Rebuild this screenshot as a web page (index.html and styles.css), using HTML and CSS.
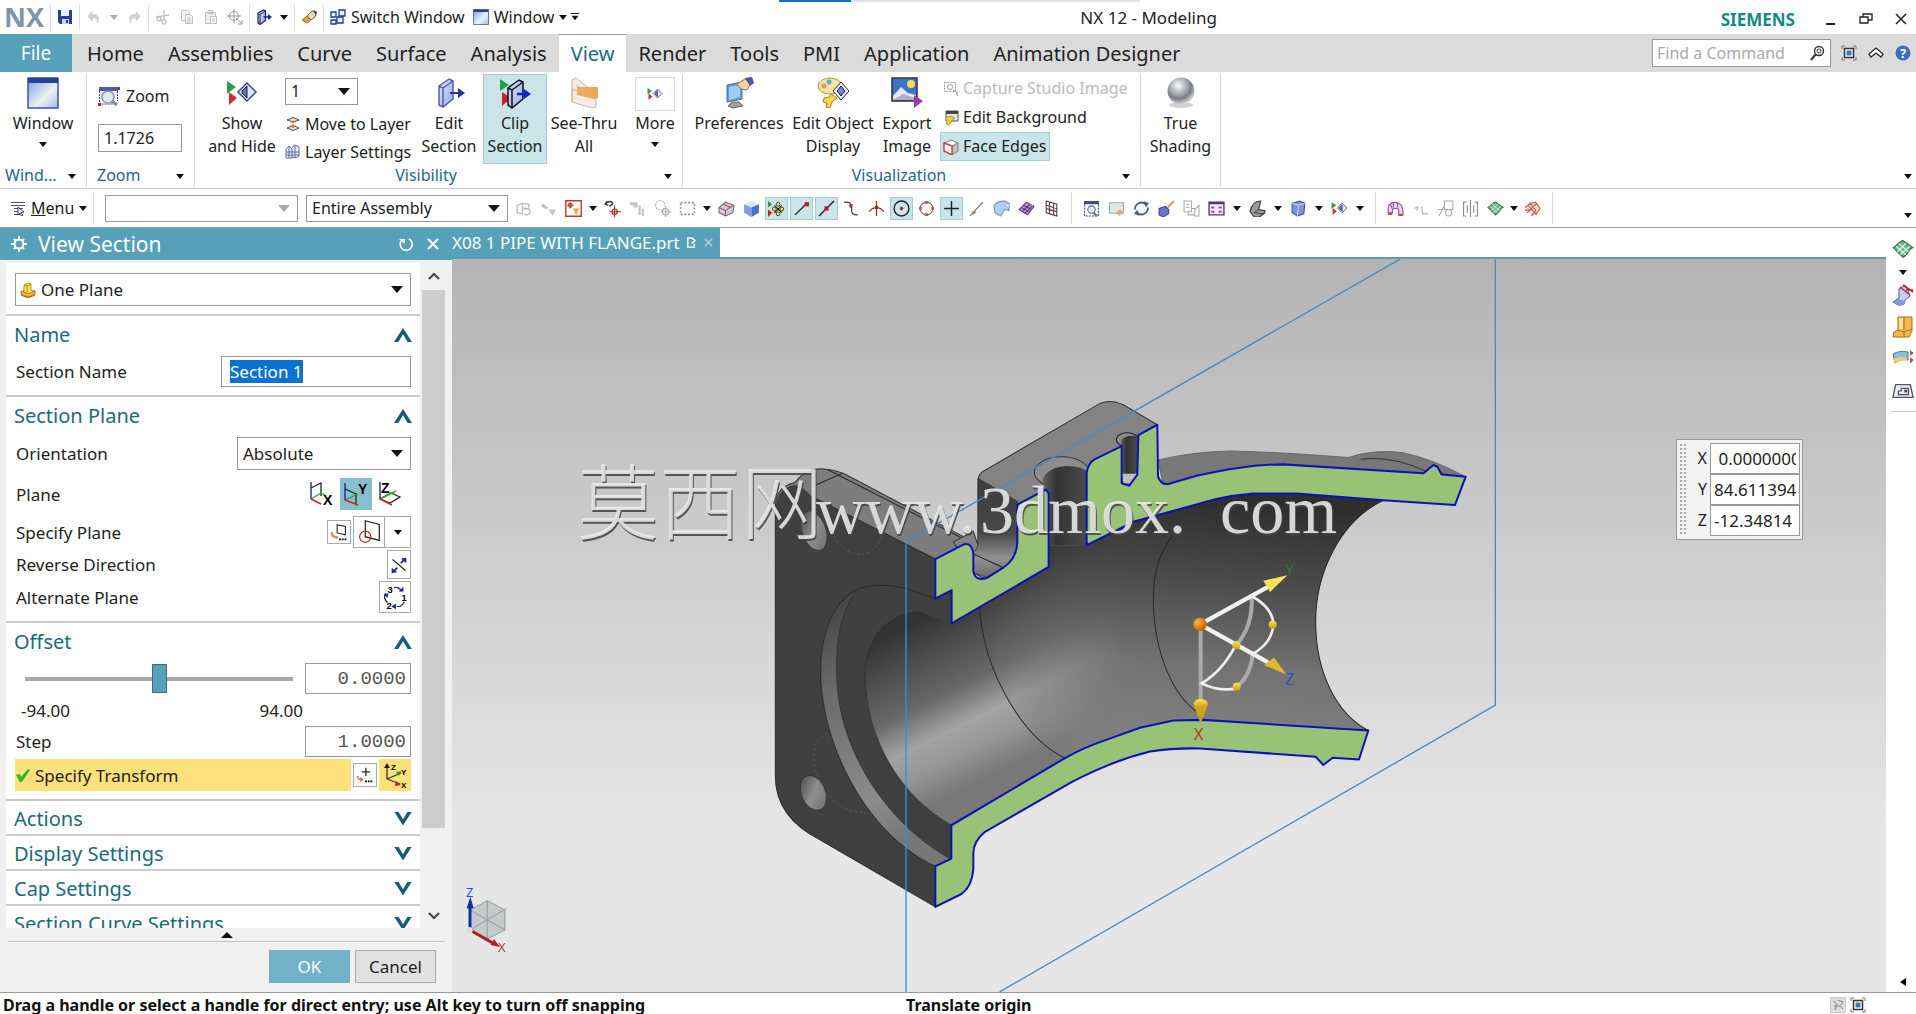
FILE: index.html
```html
<!DOCTYPE html>
<html lang="en">
<head>
<meta charset="utf-8">
<title>NX 12 - Modeling</title>
<link rel="stylesheet" href="styles.css">
<script src="app.js" defer></script>
</head>
<body>

<!-- Icon library -->
<svg class="sprite" aria-hidden="true">
  <defs>
    <linearGradient id="gBlue" x1="0" y1="0" x2="1" y2="1"><stop offset="0" stop-color="#7d9be0"/><stop offset=".6" stop-color="#eaf5ee"/><stop offset="1" stop-color="#a8b8ec"/></linearGradient>
    <linearGradient id="gSlab" x1="0" y1="0" x2="1" y2="1"><stop offset="0" stop-color="#dfe6fb"/><stop offset="1" stop-color="#94a8e6"/></linearGradient>
    <radialGradient id="gBall" cx=".4" cy=".3" r=".7"><stop offset="0" stop-color="#fff"/><stop offset=".35" stop-color="#b9bcc0"/><stop offset=".7" stop-color="#7b7e83"/><stop offset="1" stop-color="#d5d7da"/></radialGradient>
  </defs>
  <symbol id="i-down" viewBox="0 0 8 8"><path d="M0 2h8L4 7z"/></symbol>
  <symbol id="i-save" viewBox="0 0 16 16"><path d="M1 1h14v14H3l-2-2z" fill="#27408f"/><path d="M4 1h8v6H4z" fill="#eef2fa"/><path d="M5 10h7v5H5z" fill="#c8d2ea"/><path d="M9 11h2v3H9z" fill="#27408f"/></symbol>
  <symbol id="i-undo" viewBox="0 0 16 16"><path d="M2 7l4-4v3c6-1 8 2 5 8 1-4-1-6-5-5v3z" fill="#d2d2d2" stroke="#bbb" stroke-width=".6"/></symbol>
  <symbol id="i-redo" viewBox="0 0 16 16"><path d="M14 7l-4-4v3C4 5 2 8 5 14c-1-4 1-6 5-5v3z" fill="#d2d2d2" stroke="#bbb" stroke-width=".6"/></symbol>
  <symbol id="i-cut" viewBox="0 0 16 16"><g fill="none" stroke="#c4c4c4" stroke-width="1.4"><path d="M9 1v11M1 8l13-2"/><circle cx="4" cy="10" r="2"/><circle cx="9" cy="13" r="2"/></g></symbol>
  <symbol id="i-copy" viewBox="0 0 16 16"><g fill="#f6f6f6" stroke="#c0c0c0"><path d="M2.500 1.500h6l2 2v8h-8z"/><path d="M6.500 5.500h5l2 2v7h-7z"/><path d="M8 9h4M8 11h4M8 13h4"/></g></symbol>
  <symbol id="i-paste" viewBox="0 0 16 16"><g fill="#eee" stroke="#c0c0c0"><path d="M2.500 3.500h10v11h-10zM5 1.500h5v3H5z"/><path d="M7.500 7.500h6v7h-6zM9 10h3M9 12h3" fill="#fff"/></g></symbol>
  <symbol id="i-snip" viewBox="0 0 16 16"><g fill="none" stroke="#999"><circle cx="7" cy="7" r="4.500"/><path d="M7 0v14M0 7h14M9 9l6 6M15 11v4h-4"/></g></symbol>
  <symbol id="i-slab" viewBox="0 0 32 32"><path d="M6 9l10-7 4 2v18l-10 8-4-2z" fill="url(#gSlab)" stroke="#5360a6" stroke-width="1.500"/><path d="M6 9l4 2v19M10 11l10-7" fill="none" stroke="#5360a6" stroke-width="1.500"/><path d="M17 16h10" stroke="#27339b" stroke-width="2"/><path d="M25 11l7 5-7 5z" fill="#27339b"/></symbol>
  <symbol id="i-clip" viewBox="0 0 32 32"><path d="M1 2l9 6-9 6z" fill="#1fa34a"/><path d="M3 15l9 6-9 8z" fill="#d11f22"/><path d="M9 11l11-8 4 2v17l-11 9-4-3z" fill="url(#gSlab)" stroke="#111" stroke-width="1.500"/><path d="M9 11l4 2v18M13 13L24 5" fill="none" stroke="#111" stroke-width="1.500"/><path d="M18 17h9" stroke="#1323c9" stroke-width="2.500"/><path d="M25 12l7 5-7 5z" fill="#1323c9"/></symbol>
  <symbol id="i-slabdark" viewBox="0 0 32 32"><path d="M4 8l11-6 4 2v19L8 31l-4-3z" fill="url(#gSlab)" stroke="#1b2560" stroke-width="2.500"/><path d="M4 8l4 3v20M8 11l11-7" fill="none" stroke="#1b2560" stroke-width="2"/><path d="M15 16h11" stroke="#1323a9" stroke-width="3"/><path d="M24 10l8 6-8 6z" fill="#1323a9"/></symbol>
  <symbol id="i-eraser" viewBox="0 0 16 16"><path d="M1 11l5-4 5 3-5 4z" fill="#e8a23a" stroke="#7a4d12" stroke-width=".7"/><path d="M6 7l5-5 4 1-1 5-4 3z" fill="#f3d79a" stroke="#30408f" stroke-width=".8"/><path d="M12 1l4 2-1 4z" fill="#2b3fa5"/></symbol>
  <symbol id="i-switch" viewBox="0 0 16 16"><g fill="#e7eefb" stroke="#1d3c8f" stroke-width="1.300"><path d="M1 3h5v5H1zM9 1h6v6H9zM1 11h5v4H1z"/><path d="M7 8h6v6H7z"/></g></symbol>
  <symbol id="i-window" viewBox="0 0 32 32"><path d="M1 1h30v30H1z" fill="url(#gBlue)" stroke="#3a50b0" stroke-width="1.500"/><path d="M1 1h30v5H1z" fill="#263fa0"/></symbol>
  <symbol id="i-zoom" viewBox="0 0 24 20"><path d="M1 1h19v4H1z" fill="#4a5f9c"/><path d="M1.500 5v13h16" fill="none" stroke="#2d3e9c" stroke-dasharray="2 1"/><path d="M19.500 5v10" stroke="#2d3e9c" stroke-dasharray="2 1"/><circle cx="10" cy="11" r="6" fill="#e4eaee" stroke="#8b9499" stroke-width="1.600"/><path d="M14 15l5 4" stroke="#8a8f95" stroke-width="3"/><path d="M0 17h3v3H0zM19 1h3v3h-3z" fill="#c3211f"/></symbol>
  <symbol id="i-showhide" viewBox="0 0 32 24"><path d="M1 0l9 6-9 7z" fill="#2f9e4c"/><path d="M3 11l8 6-8 7z" fill="#d02d2d"/><path d="M21 2l9 9-9 9-9-9z" fill="#dfe7f8" stroke="#3b4a8c" stroke-width="1.500"/><path d="M21 5v12l-5-5v-2z" fill="#5b6fc4" stroke="#223"/></symbol>
  <symbol id="i-mlayer" viewBox="0 0 16 16"><g fill="none" stroke="#555"><path d="M2 4l6-2.500L14 4 8 6zM2 12l6-2.500 6 2.500-6 2.500z" fill="#e6e2d4"/><path d="M8 5v6M5.500 7L8 4.500 10.500 7M5.500 9.500L8 12l2.500-2.500" stroke="#d0732c"/></g></symbol>
  <symbol id="i-layer" viewBox="0 0 16 16"><g fill="none" stroke="#6070a8"><path d="M1 5l3-3 3 3v9H1zM7 3l3-2 4 2v9l-4 2-3-1" fill="#e8ecf8"/><path d="M1 8h13M1 11h13M4 2v12M10 1v13"/></g></symbol>
  <symbol id="i-seethru" viewBox="0 0 32 32"><path d="M4 3l4-2 20 16v13l-4 1L4 25z" fill="#f3ebe4" stroke="#c9b6a8"/><path d="M9 10h21v11l-4 1-17-4z" fill="#f0a75a"/><path d="M8 8l20 13M4 25V12l22 10" stroke="#d2b49a" fill="none"/></symbol>
  <symbol id="i-pref" viewBox="0 0 32 32"><path d="M4 8l15-3v17L4 25z" fill="#5b9fe0" stroke="#5a6b80"/><path d="M6 10l11-2v12L6 23z" fill="#9ccdf7"/><path d="M9 25h7l4 4-10 2-5-2z" fill="#9aa2ab" stroke="#666"/><path d="M14 7l8-5 6 4-4 7-6-1z" fill="#f2d69e" stroke="#987540"/><path d="M22 1l7-1 2 6-4 3z" fill="#4f4fae"/></symbol>
  <symbol id="i-editobj" viewBox="0 0 32 32"><ellipse cx="13" cy="9" rx="12" ry="8" fill="#f5e3a4" stroke="#b69434"/><circle cx="7" cy="9" r="2.500" fill="#e49a54"/><circle cx="12" cy="5" r="2.500" fill="#4fb4d8"/><path d="M24 5l8 9-8 9-8-9z" fill="#eef1fb" stroke="#222"/><path d="M24 9l4 5-4 5-4-5z" fill="#7084d8" stroke="#222"/><path d="M14 17l6 4-5 4-2 6-4-1 1-4-4-1 1-4 5-1z" fill="#f6d64a" stroke="#a3831b"/></symbol>
  <symbol id="i-export" viewBox="0 0 32 32"><path d="M1 1h25v23H1z" fill="#3d72c9" stroke="#333" stroke-width="1.500"/><path d="M2 19l8-9 7 6 8 2v5H2z" fill="#e7e6f3"/><path d="M2 23l10-6 13 4v2H2z" fill="#b5a9d0"/><circle cx="20" cy="7" r="4" fill="#f6dc4f"/><path d="M23 18l9 6-9 7z" fill="#a534b4"/></symbol>
  <symbol id="i-capture" viewBox="0 0 16 16"><g fill="none" stroke="#999"><path d="M1.500 1.500h11v9h-11z" stroke-dasharray="2 1"/><circle cx="7" cy="6" r="2.500"/><path d="M10 9l5 3-2 1 2 2"/></g></symbol>
  <symbol id="i-editbg" viewBox="0 0 16 16"><path d="M3 1h12v10H3z" fill="#e8e8e8" stroke="#555"/><path d="M3 1h12v3H3z" fill="#444"/><path d="M8 6l4 2-3 2-3 5-3-1 1-3-2-1 2-3z" fill="#f3c93a" stroke="#a3831b" stroke-width=".7"/></symbol>
  <symbol id="i-edges" viewBox="0 0 16 16"><path d="M1 4l7-3 7 3-6 3z" fill="#fff" stroke="#888"/><path d="M9 7l6-3v8l-6 4z" fill="#b9c1cb" stroke="#888"/><path d="M1 4l8 3v9l-8-4z" fill="#fff" stroke="#c8412c" stroke-width="1.400"/></symbol>
  <symbol id="i-ball" viewBox="0 0 32 32"><ellipse cx="16" cy="28" rx="12" ry="3" fill="#d0d0d0"/><circle cx="16" cy="14" r="13.500" fill="url(#gBall)"/></symbol>
  <symbol id="i-menu" viewBox="0 0 16 16"><g fill="none" stroke="#3c4f98"><path d="M1 2.500h14M1 5.500h14M4 8.500h9M4 11.500h5M4 14.500h6"/></g><path d="M8 7l6 5-3 .5 2 3-1.500.5-1.500-3-2 2z" fill="#fff" stroke="#222" stroke-width=".8"/></symbol>
  <symbol id="i-g1" viewBox="0 0 16 16"><path d="M2 5l5-2v10l-5-1zM7 3l6 1v5M9 9a3 3 0 1 1 0 4M7 8h5" fill="none" stroke="#bcbcbc" stroke-width="1.300"/></symbol>
  <symbol id="i-g2" viewBox="0 0 16 16"><path d="M2 3l6 4-2 2-5-3zM8 9h7l-3 6z" fill="#c4c4c4"/></symbol>
  <symbol id="i-filter" viewBox="0 0 16 16"><path d="M.7.7h14.600v14.600H.7z" fill="#fff" stroke="#c0392b" stroke-width="1.300"/><path d="M5 2v6M2 5h6" stroke="#c0392b"/><circle cx="5" cy="5" r="1.800" fill="none" stroke="#c0392b"/><path d="M7 8h7l-2.500 3v3l-2-1v-2z" fill="#f2a13a"/></symbol>
  <symbol id="i-point" viewBox="0 0 16 16"><path d="M1 4c3-4 7-3 7 0L5 6M3 1L1 4l3 1" fill="none" stroke="#333" stroke-width="1.300"/><path d="M10 5v11M5 11h11" stroke="#9d2b25"/><circle cx="10" cy="11" r="2.500" fill="none" stroke="#9d2b25"/></symbol>
  <symbol id="i-g3" viewBox="0 0 16 16"><path d="M1 2h7v5H4V5H1zM9 5h2v9H9zM12 8h2v7h-2z" fill="#c4c4c4"/></symbol>
  <symbol id="i-g4" viewBox="0 0 16 16"><circle cx="6" cy="5" r="4.500" fill="none" stroke="#aaa" stroke-dasharray="1.500 1"/><circle cx="11" cy="11" r="3" fill="none" stroke="#aaa"/><path d="M11 6v10M6 11h10" stroke="#aaa"/></symbol>
  <symbol id="i-marquee" viewBox="0 0 16 16"><path d="M1.500 2.500h13v11h-13z" fill="none" stroke="#999" stroke-width="1.500" stroke-dasharray="2 1.500"/></symbol>
  <symbol id="i-solid" viewBox="0 0 16 16"><path d="M1 7l6-5 8 3-1 7-7 3-6-3z" fill="#cfcbd8" stroke="#7b6270"/><path d="M1 7l6 3v5M7 10l7-5M5 4l7 3" fill="none" stroke="#a2545c"/></symbol>
  <symbol id="i-cube" viewBox="0 0 16 16"><path d="M1 4l7-3 7 3-7 3z" fill="#dce8fb"/><path d="M1 4l7 3v9l-7-4z" fill="#7e9fe2"/><path d="M15 4L8 7v9l7-4z" fill="#4b70c8"/></symbol>
  <symbol id="i-snap" viewBox="0 0 16 16"><path d="M0 1l4 3-4 3z" fill="#2a9a48"/><path d="M0 9l4 3-4 4z" fill="#c22"/><path d="M6 5l7 7M13 5l-7 7" stroke="#222"/><g fill="#f2e23f" stroke="#333" stroke-width=".8"><circle cx="9.500" cy="4" r="1.800"/><circle cx="6" cy="8.500" r="1.800"/><circle cx="13" cy="8.500" r="1.800"/><circle cx="9.500" cy="13" r="1.800"/></g></symbol>
  <symbol id="i-end" viewBox="0 0 16 16"><path d="M2 14L13 3" stroke="#222" stroke-width="1.300"/><path d="M11 2h4v4h-4z" fill="#b32222"/></symbol>
  <symbol id="i-mid" viewBox="0 0 16 16"><path d="M1 15L15 1" stroke="#222" stroke-width="1.300"/><path d="M6 6h4v4H6z" fill="#b32222"/></symbol>
  <symbol id="i-ctrl" viewBox="0 0 16 16"><path d="M1 2c6 0 7 1 7 6s1 6 6 6" fill="none" stroke="#444" stroke-width="1.200"/><path d="M6 4h3v3H6z" fill="#b32222"/></symbol>
  <symbol id="i-inter" viewBox="0 0 16 16"><path d="M1 11c4-5 10-5 14 0M8 1v14" fill="none" stroke="#7a3a35" stroke-width="1.200"/><path d="M6.500 5.500h3v3h-3z" fill="#b32222"/></symbol>
  <symbol id="i-center" viewBox="0 0 16 16"><circle cx="8" cy="8" r="7" fill="none" stroke="#222" stroke-width="1.300"/><circle cx="8" cy="8" r="1.700" fill="#b32222"/></symbol>
  <symbol id="i-quad" viewBox="0 0 16 16"><circle cx="8" cy="8" r="6" fill="none" stroke="#8b5c55"/><path d="M6.500 1h3v2.500h-3zM6.500 12.500h3V15h-3zM1 6.500h2.500v3H1zM12.500 6.500H15v3h-2.500z" fill="#c25a50"/></symbol>
  <symbol id="i-plus" viewBox="0 0 16 16"><path d="M8 1v14M1 8h14" stroke="#222" stroke-width="1.400"/></symbol>
  <symbol id="i-oncurve" viewBox="0 0 16 16"><path d="M2 15L14 2" stroke="#777" stroke-width="1.200"/><path d="M4 10l4 1-3 3z" fill="#c87a3a"/></symbol>
  <symbol id="i-face" viewBox="0 0 16 16"><path d="M1 5c3-4 8-4 10-4l4 2v7l-4-1c-1 1-2 4-4 6l-5-3c-1-2-1-5-1-7z" fill="#b4d0f0" stroke="#7391b8"/><path d="M11 5l4-2v5z" fill="#eef6ff" stroke="#7391b8" stroke-width=".6"/></symbol>
  <symbol id="i-mesh" viewBox="0 0 16 16"><path d="M1 9l7-7 7 4-6 8z" fill="#b49ad0" stroke="#5b3d78"/><path d="M3 7l8 4M5 5l8 4M4 11l7-7M6 13l7-7" stroke="#5b3d78"/></symbol>
  <symbol id="i-grid" viewBox="0 0 16 16"><path d="M3 1l10 3v11L3 12zM3 5l10 3M3 8l10 3M6 2v11M10 3v11" fill="none" stroke="#5b3a38"/></symbol>
  <symbol id="i-fit" viewBox="0 0 16 16"><path d="M1 1h14v3H1z" fill="#3c4a80"/><path d="M1.500 4v11h13V4" fill="none" stroke="#3c4a80" stroke-dasharray="2 1"/><circle cx="8" cy="9" r="3.500" fill="#dde8ef" stroke="#667"/><path d="M10 12l3 3" stroke="#667" stroke-width="2"/></symbol>
  <symbol id="i-shade" viewBox="0 0 16 16"><path d="M1.500 2.500h13v10h-13z" fill="#e1e6ea" stroke="#9aa"/><path d="M7 12l4-3 3 2-3 4z" fill="#e8a872"/></symbol>
  <symbol id="i-rot" viewBox="0 0 16 16"><path d="M2 9a6 6 0 0 1 10-5M14 7a6 6 0 0 1-10 5" fill="none" stroke="#4a5b90" stroke-width="1.700"/><path d="M10 1l5 2-3 4zM6 15l-5-2 3-4z" fill="#4a5b90"/></symbol>
  <symbol id="i-brush" viewBox="0 0 16 16"><path d="M1 8l6-2 3 3v4l-5 3-4-2z" fill="#6577c9" stroke="#3c4a90"/><path d="M9 7l6-6" stroke="#e39a55" stroke-width="2"/></symbol>
  <symbol id="i-persp" viewBox="0 0 16 16"><path d="M1 1h7v10H1zM8 8h3v7h4V5l-4 4M5 11v3h6" fill="none" stroke="#aaa"/><path d="M3 4h3M3 7h3" stroke="#aaa"/></symbol>
  <symbol id="i-orient" viewBox="0 0 16 16"><path d="M1 2h14v12H1z" fill="#eef" stroke="#443a80" stroke-width="1.300"/><path d="M1 2h14v2H1z" fill="#443a80"/><path d="M3 6h3v2H3zM10 6h3v2h-3zM3 10h3v2H3zM10 10h3v2h-3z" fill="#c24a6a"/></symbol>
  <symbol id="i-edge" viewBox="0 0 16 16"><path d="M1 11C2 6 5 1 11 1L9 9l6 1v2l-5 4H5z" fill="#9a9a9a" stroke="#333"/><path d="M5 12L9 9M5 12l9 1" stroke="#333" stroke-width=".8"/></symbol>
  <symbol id="i-box" viewBox="0 0 16 16"><path d="M2 3l7-2 5 2-1 10-6 2-5-3z" fill="#7b93de" stroke="#3b4fa0"/><path d="M2 3l6 2 6-2M8 5l-1 10" fill="none" stroke="#c6d2f6"/></symbol>
  <symbol id="i-clipa" viewBox="0 0 16 16"><path d="M1 8c0-8 14-8 14 2v4h-4v-4c0-3-6-3-6 0v2H1z" fill="#e7d7ee" stroke="#8a4fa8"/><path d="M1 12v2h4v-2zM11 13h4v2h-4z" fill="#d8472f"/><path d="M6 2v5M10 2v5M3 4l2 4" stroke="#8a4fa8"/></symbol>
  <symbol id="i-dots" viewBox="0 0 16 16"><path d="M2 8l4-2M9 6l1 7h5M4 10l2-3" fill="none" stroke="#c0c0c0" stroke-width="1.300"/></symbol>
  <symbol id="i-measure" viewBox="0 0 16 16"><path d="M7 1h8v8H7zM2 15L7 5M1 9h5" fill="none" stroke="#aaa"/><circle cx="11" cy="12" r="3" fill="none" stroke="#aaa"/></symbol>
  <symbol id="i-cols" viewBox="0 0 16 16"><path d="M4 2H1.500v13H4M12 2h2.500v13H12M8 0v16M5 5v7M11 5v7" fill="none" stroke="#888"/></symbol>
  <symbol id="i-sheet" viewBox="0 0 16 16"><path d="M1 7c3-1 4-5 7-5l7 5c-3 1-4 6-7 7z" fill="#6cb58a" stroke="#377a54"/><path d="M3 6l7 6M5 4l7 6M4 10l6-6M6 12l7-6" stroke="#e4f3ea" stroke-width=".8"/></symbol>
  <symbol id="i-curvy" viewBox="0 0 16 16"><path d="M1 7l4-5 6 1 4 5-3 6-5 1z" fill="#f4ddd4"/><path d="M1 7l5-4 5 7-4 5M7 3l4-1 4 6-4 6M3 12l9-9M1 10l4-1M4 5l7 8" fill="none" stroke="#c0694c" stroke-width="1.200"/></symbol>
  <symbol id="i-patch" viewBox="0 0 22 22"><path d="M7 5L13 1l3 5 2 6-5 4-1 4-6 1-5-3 6-4z" fill="#c4d3f3" stroke="#4259a8"/><path d="M1 18l5-3 7 2-1 4-5 1z" fill="#7d9ae6"/><path d="M8 3l10 8M11 1l10 7M14 6h7" stroke="#c0263f" stroke-width="1.600"/></symbol>
  <symbol id="i-boss" viewBox="0 0 22 22"><path d="M6 1h14v14l-3 6H1l1-5 4-2z" fill="#f2b84a" stroke="#a46f12"/><path d="M12 1v13M6 14l6 2 8-3M12 16v5" fill="none" stroke="#a46f12"/><path d="M7 2h4v11H7z" fill="#fbe19b"/></symbol>
  <symbol id="i-band" viewBox="0 0 22 22"><path d="M1 6c5-3 10-3 15-2v8c-5-1-9 0-13 3z" fill="#86bede" stroke="#55709b"/><path d="M1 11c5-2 9-3 14-1v3c-5-1-8 0-12 2z" fill="#f0cf60"/><path d="M18 3l3 2-3 2M18 10l3 2-3 3" fill="#d9532c" stroke="#6b3aa0"/></symbol>
  <symbol id="i-sketch" viewBox="0 0 24 16"><path d="M4 1h16l3 14H1z" fill="#e9edf4" stroke="#556" stroke-width="1.500"/><path d="M7 12V8h3V5h8v7zM14 7h2v2h-2z" fill="none" stroke="#445" stroke-width="1.200"/></symbol>
  <symbol id="i-full" viewBox="0 0 16 16"><path d="M1 4V1h3M12 1h3v3M15 12v3h-3M4 15H1v-3" fill="none" stroke="#777"/><path d="M3.500 3.500h9v9h-9z" fill="#fff" stroke="#333" stroke-width="1.500"/><path d="M5.500 5.500h5v5h-5z" fill="#3f78c0"/></symbol>
  <symbol id="i-flags" viewBox="0 0 16 16"><path d="M.5.5h15v15H.5z" fill="#ddd" stroke="#ccc"/><path d="M3 4l4 3-2 6M8 3l5 2-2 3M10 9l3 3M4 9h7" fill="none" stroke="#888"/></symbol>
</svg>

<!-- Title bar -->
<header class="titlebar">
  <div class="quick">
    <span class="logo">NX</span>
    <i class="sep"></i>
    <button class="tb" aria-label="Save"><svg><use href="#i-save"/></svg></button>
    <i class="sep"></i>
    <button class="tb" aria-label="Undo"><svg><use href="#i-undo"/></svg></button>
    <button class="caret caret--dim" aria-label="Undo list"><svg><use href="#i-down"/></svg></button>
    <button class="tb" aria-label="Redo"><svg><use href="#i-redo"/></svg></button>
    <i class="sep"></i>
    <button class="tb" aria-label="Cut"><svg><use href="#i-cut"/></svg></button>
    <button class="tb" aria-label="Copy"><svg><use href="#i-copy"/></svg></button>
    <button class="tb" aria-label="Paste"><svg><use href="#i-paste"/></svg></button>
    <button class="tb" aria-label="Repeat command"><svg><use href="#i-snip"/></svg></button>
    <i class="sep"></i>
    <button class="tb" aria-label="Clip section"><svg><use href="#i-slabdark"/></svg></button>
    <button class="caret" aria-label="Section list"><svg><use href="#i-down"/></svg></button>
    <i class="sep"></i>
    <button class="tb" aria-label="Touch mode"><svg><use href="#i-eraser"/></svg></button>
    <i class="sep"></i>
    <button class="tb-text"><svg><use href="#i-switch"/></svg>Switch Window</button>
    <button class="tb-text tb-text--next"><svg><use href="#i-window"/></svg>Window<svg class="mini"><use href="#i-down"/></svg></button>
    <button class="caret caret--bar" aria-label="Customize"><svg><use href="#i-down"/></svg></button>
  </div>
  <div class="progress"><span></span></div>
  <h1>NX 12 - Modeling</h1>
  <div class="window-controls">
    <span class="brand">SIEMENS</span>
    <button aria-label="Minimize"><svg viewBox="0 0 14 14"><path d="M2 12h9" stroke="#222" stroke-width="2"/></svg></button>
    <button aria-label="Restore"><svg viewBox="0 0 14 14"><path d="M1 5h8v6H1zM4 5V2h9v6H9" fill="none" stroke="#222" stroke-width="1.300"/></svg></button>
    <button aria-label="Close"><svg viewBox="0 0 14 14"><path d="M2 2l10 10M12 2L2 12" stroke="#222" stroke-width="1.500"/></svg></button>
  </div>
</header>

<nav class="tabs">
  <button class="tab tab--file">File</button>
  <button class="tab">Home</button>
  <button class="tab">Assemblies</button>
  <button class="tab">Curve</button>
  <button class="tab">Surface</button>
  <button class="tab">Analysis</button>
  <button class="tab tab--on">View</button>
  <button class="tab">Render</button>
  <button class="tab">Tools</button>
  <button class="tab">PMI</button>
  <button class="tab">Application</button>
  <button class="tab">Animation Designer</button>
  <div class="find">
    <input type="text" placeholder="Find a Command" aria-label="Find a Command">
    <svg viewBox="0 0 16 16"><circle cx="10" cy="6" r="4.500" fill="none" stroke="#333" stroke-width="1.400"/><circle cx="10" cy="6" r="2" fill="none" stroke="#333"/><path d="M7 9l-5 6" stroke="#333" stroke-width="2"/></svg>
  </div>
  <div class="tab-tools">
    <button aria-label="Full screen"><svg><use href="#i-full"/></svg></button>
    <button aria-label="Minimize ribbon"><svg viewBox="0 0 16 16"><path d="M1 9l7-6 7 6-2 3-5-4-5 4z" fill="#fff" stroke="#222" stroke-width="1.300"/></svg></button>
    <button aria-label="Help"><svg viewBox="0 0 16 16"><circle cx="8" cy="8" r="7.500" fill="#3d6cc0"/><text x="8" y="13" text-anchor="middle" class="help-mark">?</text></svg></button>
  </div>
</nav>

<!-- Ribbon -->
<section class="ribbon">
  <div class="group group--window">
    <div class="group-body">
      <button class="big"><svg><use href="#i-window"/></svg>Window<svg class="mini"><use href="#i-down"/></svg></button>
    </div>
    <div class="group-foot"><span>Wind...</span><svg class="mini"><use href="#i-down"/></svg></div>
  </div>
  <div class="group group--zoom">
    <div class="group-body zoom-body">
      <button class="row-btn"><svg class="zoom-icon"><use href="#i-zoom"/></svg>Zoom</button>
      <input type="text" class="scale" value="1.1726" aria-label="Zoom scale">
    </div>
    <div class="group-foot"><span>Zoom</span><svg class="mini"><use href="#i-down"/></svg></div>
  </div>
  <div class="group group--vis">
    <div class="group-body">
      <button class="big big--show"><svg class="short"><use href="#i-showhide"/></svg>Show<br>and Hide</button>
      <div class="stack">
        <span class="select layer"><select aria-label="Work layer"><option>1</option></select></span>
        <button class="row-btn"><svg><use href="#i-mlayer"/></svg>Move to Layer</button>
        <button class="row-btn"><svg><use href="#i-layer"/></svg>Layer Settings</button>
      </div>
      <button class="big big--edit"><svg><use href="#i-slab"/></svg>Edit<br>Section</button>
      <button class="big big--clip on"><svg><use href="#i-clip"/></svg>Clip<br>Section</button>
      <button class="big big--see"><svg><use href="#i-seethru"/></svg>See-Thru<br>All</button>
      <button class="big big--more"><span class="more-box"><svg><use href="#i-showhide"/></svg></span>More<svg class="mini"><use href="#i-down"/></svg></button>
    </div>
    <div class="group-foot group-foot--mid"><span>Visibility</span><svg class="mini"><use href="#i-down"/></svg></div>
  </div>
  <div class="group group--viz">
    <div class="group-body">
      <button class="big big--pref"><svg><use href="#i-pref"/></svg>Preferences</button>
      <button class="big big--obj"><svg><use href="#i-editobj"/></svg>Edit Object<br>Display</button>
      <button class="big big--exp"><svg><use href="#i-export"/></svg>Export<br>Image</button>
      <div class="stack stack--tight">
        <button class="row-btn" disabled><svg><use href="#i-capture"/></svg>Capture Studio Image</button>
        <button class="row-btn"><svg><use href="#i-editbg"/></svg>Edit Background</button>
        <button class="row-btn on"><svg><use href="#i-edges"/></svg>Face Edges</button>
      </div>
    </div>
    <div class="group-foot group-foot--mid"><span>Visualization</span><svg class="mini"><use href="#i-down"/></svg></div>
  </div>
  <div class="group group--true">
    <div class="group-body">
      <button class="big"><svg><use href="#i-ball"/></svg>True<br>Shading</button>
    </div>
  </div>
  <button class="caret ribbon-more" aria-label="Ribbon options"><svg><use href="#i-down"/></svg></button>
</section>

<!-- Selection bar -->
<section class="selbar">
  <button class="menu-btn"><svg><use href="#i-menu"/></svg><span><u>M</u>enu</span><svg class="mini"><use href="#i-down"/></svg></button>
  <span class="select select--dim type-filter"><select aria-label="Type filter"><option></option></select></span>
  <span class="select scope"><select aria-label="Selection scope"><option>Entire Assembly</option></select></span>
  <div class="strip strip--snap">
    <button class="tool" aria-label="Reset filters"><svg><use href="#i-g1"/></svg></button>
    <button class="tool" aria-label="Priority"><svg><use href="#i-g2"/></svg></button>
    <button class="tool" aria-label="General filters"><svg><use href="#i-filter"/></svg></button>
    <button class="caret" aria-label="Filter list"><svg><use href="#i-down"/></svg></button>
    <button class="tool" aria-label="Point dialog"><svg><use href="#i-point"/></svg></button>
    <button class="tool" aria-label="Highlight"><svg><use href="#i-g3"/></svg></button>
    <button class="tool" aria-label="Deselect"><svg><use href="#i-g4"/></svg></button>
    <button class="tool" aria-label="Marquee"><svg><use href="#i-marquee"/></svg></button>
    <button class="caret" aria-label="Marquee list"><svg><use href="#i-down"/></svg></button>
    <button class="tool" aria-label="Solid body"><svg><use href="#i-solid"/></svg></button>
    <button class="tool" aria-label="Allow interior"><svg><use href="#i-cube"/></svg></button>
    <button class="tool on" aria-label="Enable snap point"><svg><use href="#i-snap"/></svg></button>
    <button class="tool on" aria-label="End point"><svg><use href="#i-end"/></svg></button>
    <button class="tool on" aria-label="Mid point"><svg><use href="#i-mid"/></svg></button>
    <button class="tool" aria-label="Control point"><svg><use href="#i-ctrl"/></svg></button>
    <button class="tool" aria-label="Intersection"><svg><use href="#i-inter"/></svg></button>
    <button class="tool on" aria-label="Arc center"><svg><use href="#i-center"/></svg></button>
    <button class="tool" aria-label="Quadrant point"><svg><use href="#i-quad"/></svg></button>
    <button class="tool on" aria-label="Existing point"><svg><use href="#i-plus"/></svg></button>
    <button class="tool" aria-label="Point on curve"><svg><use href="#i-oncurve"/></svg></button>
    <button class="tool" aria-label="Point on face"><svg><use href="#i-face"/></svg></button>
    <button class="tool" aria-label="Facet vertex"><svg><use href="#i-mesh"/></svg></button>
    <button class="tool" aria-label="Bounded grid"><svg><use href="#i-grid"/></svg></button>
  </div>
  <div class="strip">
    <button class="tool" aria-label="Fit"><svg><use href="#i-fit"/></svg></button>
    <button class="tool" aria-label="Zoom area"><svg><use href="#i-shade"/></svg></button>
    <button class="tool" aria-label="Rotate"><svg><use href="#i-rot"/></svg></button>
    <button class="tool" aria-label="Snap view"><svg><use href="#i-brush"/></svg></button>
    <button class="tool" aria-label="Perspective"><svg><use href="#i-persp"/></svg></button>
    <button class="tool" aria-label="Orient view"><svg><use href="#i-orient"/></svg></button>
    <button class="caret" aria-label="Orient list"><svg><use href="#i-down"/></svg></button>
    <button class="tool" aria-label="Edge display"><svg><use href="#i-edge"/></svg></button>
    <button class="caret" aria-label="Edge list"><svg><use href="#i-down"/></svg></button>
    <button class="tool" aria-label="Rendering style"><svg><use href="#i-box"/></svg></button>
    <button class="caret" aria-label="Style list"><svg><use href="#i-down"/></svg></button>
    <button class="tool" aria-label="Show and hide"><svg><use href="#i-showhide"/></svg></button>
    <button class="caret" aria-label="Show list"><svg><use href="#i-down"/></svg></button>
  </div>
  <div class="strip strip--last">
    <button class="tool" aria-label="Assembly load"><svg><use href="#i-clipa"/></svg></button>
    <button class="tool" aria-label="Points"><svg><use href="#i-dots"/></svg></button>
    <button class="tool" aria-label="Measure"><svg><use href="#i-measure"/></svg></button>
    <button class="tool" aria-label="Distance"><svg><use href="#i-cols"/></svg></button>
    <button class="tool" aria-label="Sheet"><svg><use href="#i-sheet"/></svg></button>
    <button class="caret" aria-label="Sheet list"><svg><use href="#i-down"/></svg></button>
    <button class="tool" aria-label="Curves"><svg><use href="#i-curvy"/></svg></button>
  </div>
  <button class="caret bar-more" aria-label="Bar options"><svg><use href="#i-down"/></svg></button>
</section>

<main class="work">
  <!-- View Section dialog -->
  <form class="dialog">
    <header class="dialog-head">
      <svg viewBox="0 0 16 16"><circle cx="8" cy="8" r="4.500" fill="none" stroke="#fff" stroke-width="2"/><path d="M8 0v3M8 13v3M0 8h3M13 8h3M3 3l1.500 1.500M11.500 11.500L13 13M13 3l-1.500 1.500M4.500 11.500L3 13" stroke="#fff" stroke-width="2"/></svg>
      <h2>View Section</h2>
      <button type="button" aria-label="Reset"><svg viewBox="0 0 16 16"><path d="M4 4a6 6 0 1 0 7-1" fill="none" stroke="#fff" stroke-width="1.700"/><path d="M1 3h6v5z" fill="#fff"/></svg></button>
      <button type="button" aria-label="Close"><svg viewBox="0 0 16 16"><path d="M3 3l10 10M13 3L3 13" stroke="#fff" stroke-width="2"/></svg></button>
    </header>
    <div class="dialog-main">
      <div class="cards">
        <section class="card card--top">
          <span class="select kind">
            <svg viewBox="0 0 16 16"><path d="M1 9l7 3 7-3v3l-7 3-7-3z" fill="#f6c32c" stroke="#a05f10" stroke-width=".8"/><path d="M4 3l4-2 3 1v6l4 1-7 3-5-3 1-1z" fill="#ffe34d" stroke="#a8741a" stroke-width=".8"/><path d="M4 3l3 1v6M7 4l4-2" fill="none" stroke="#a8741a" stroke-width=".8"/><path d="M1 13l7 3 7-3" fill="none" stroke="#c43c22"/></svg>
            <select aria-label="Section type"><option>One Plane</option></select>
          </span>
        </section>
        <section class="card">
          <h3>Name<button type="button" class="fold" aria-label="Collapse Name"></button></h3>
          <div class="field field--31"><label for="sname">Section Name</label><input type="text" id="sname" value="Section 1"></div>
        </section>
        <section class="card">
          <h3>Section Plane<button type="button" class="fold" aria-label="Collapse Section Plane"></button></h3>
          <div class="field field--33"><label for="orient">Orientation</label><span class="select orient"><select id="orient"><option>Absolute</option></select></span></div>
          <div class="field field--plane"><span>Plane</span>
            <div class="planes">
              <button type="button" aria-label="X plane"><svg viewBox="0 0 32 32"><path d="M7 4v17" stroke="#223a9c" stroke-width="1.500"/><path d="M7 10l10-5v13" fill="none" stroke="#222" stroke-width="1.300"/><path d="M7 21l10-6 5 3" fill="none" stroke="#3aa03a" stroke-width="1.300"/><path d="M7 21l10 5" stroke="#c22" stroke-width="1.500"/><text x="19" y="27" class="ax">X</text></svg></button>
              <button type="button" class="on" aria-label="Y plane"><svg viewBox="0 0 32 32"><path d="M5 5v17" stroke="#1c2fb0" stroke-width="1.500"/><path d="M5 11l11 5v10" fill="none" stroke="#222" stroke-width="1.300"/><path d="M5 22l13-6" stroke="#2a9a3a" stroke-width="1.300"/><path d="M5 22l13 5" stroke="#c22" stroke-width="1.500"/><text x="18" y="16" class="ax">Y</text></svg></button>
              <button type="button" aria-label="Z plane"><svg viewBox="0 0 32 32"><path d="M4 4v17" stroke="#223a9c" stroke-width="1.500"/><path d="M4 21l11-6 9 4-10 6z" fill="none" stroke="#222" stroke-width="1.300"/><path d="M4 21l16-8" stroke="#3aa03a" stroke-width="1.500"/><path d="M4 21l12 6" stroke="#c22" stroke-width="1.500"/><text x="5" y="15" class="ax">Z</text></svg></button>
            </div>
          </div>
          <div class="field field--spec"><span>Specify Plane</span>
            <button type="button" class="sq sq--s" aria-label="Plane dialog"><svg viewBox="0 0 24 24"><path d="M10 4l9 2v9l-9-2z" fill="none" stroke="#222" stroke-width="1.200"/><path d="M4 12c0 5 3 6 7 6" fill="none" stroke="#dd8a4a" stroke-width="2.500"/><path d="M12 20h2M15 20h2M18 20h2" stroke="#000" stroke-width="2"/></svg></button>
            <span class="pair">
              <button type="button" aria-label="Inferred plane"><svg viewBox="0 0 32 32"><path d="M12 4l15 4v17l-15-4z" fill="none" stroke="#222" stroke-width="1.300"/><circle cx="12" cy="21" r="6" fill="none" stroke="#cc2222" stroke-width="1.300"/></svg></button>
              <button type="button" class="pair-caret" aria-label="Plane methods"><svg class="mini"><use href="#i-down"/></svg></button>
            </span>
          </div>
          <div class="field field--rev"><span>Reverse Direction</span><button type="button" class="sq sq--m" aria-label="Reverse Direction"><svg viewBox="0 0 24 24"><path d="M5 6l14 12" stroke="#222" stroke-width="1.300"/><path d="M6 19l4-4M14 10l4-4" stroke="#1c2a9c" stroke-width="2"/><path d="M20 4v6l-6-5zM4 21v-6l6 5z" fill="#1c2a9c"/></svg></button></div>
          <div class="field field--alt"><span>Alternate Plane</span><button type="button" class="sq sq--l" aria-label="Alternate Plane"><svg viewBox="0 0 32 32"><path d="M15 6q5-1 8 4M26 21q-3 6-8 5M8 22q-5-5-2-10" fill="none" stroke="#223" stroke-width="1.300"/><path d="M20 10h5V5zM17 23v6l-5-3zM4 13l5-1-1 5z" fill="#1c2a9c"/><text x="8" y="12" class="num">3</text><text x="23" y="20" class="num">1</text><text x="7" y="29" class="num">2</text></svg></button></div>
        </section>
        <section class="card">
          <h3>Offset<button type="button" class="fold" aria-label="Collapse Offset"></button></h3>
          <div class="slide">
            <input type="range" min="-94" max="94" value="0" aria-label="Offset slider">
            <input type="text" class="mono" value="0.0000" aria-label="Offset value">
          </div>
          <div class="limits"><span>-94.00</span><span>94.00</span></div>
          <div class="field field--31"><label for="step">Step</label><input type="text" class="mono" id="step" value="1.0000"></div>
          <div class="transform">
            <button type="button" class="spec"><svg viewBox="0 0 16 16"><path d="M1 8l4-1 1 3 7-8 2 1-8 12H5z" fill="#2eb82e"/></svg>Specify Transform</button>
            <button type="button" class="sq sq--s" aria-label="Point dialog"><svg viewBox="0 0 24 24"><path d="M13 4v9M8.500 8.500h9" stroke="#222" stroke-width="1.400"/><path d="M4 13c0 4 2 4 5 4l-2-2m2 2l-2 2" fill="none" stroke="#d46a3a" stroke-width="1.500"/><path d="M12 19h2M15 19h2M18 19h2" stroke="#000" stroke-width="2"/></svg></button>
            <button type="button" class="csys" aria-label="Dynamic CSYS"><svg viewBox="0 0 32 32"><path d="M8 20V6M8 20l14-6M8 20l13 5" fill="none" stroke="#333" stroke-width="1.300"/><path d="M5 9l3-5 3 5z" fill="#222"/><path d="M17 13l5-1-2 5z" fill="#2a9a2a"/><path d="M17 22l5 4-6 1z" fill="#b22"/><text x="12" y="11" class="tiny">Z</text><text x="22" y="16" class="tiny">Y</text><text x="22" y="29" class="tiny">X</text></svg></button>
          </div>
        </section>
        <section class="card card--shut"><h3>Actions<button type="button" class="fold fold--down" aria-label="Expand Actions"></button></h3></section>
        <section class="card card--shut"><h3>Display Settings<button type="button" class="fold fold--down" aria-label="Expand Display Settings"></button></h3></section>
        <section class="card card--shut"><h3>Cap Settings<button type="button" class="fold fold--down" aria-label="Expand Cap Settings"></button></h3></section>
        <section class="card card--shut"><h3>Section Curve Settings<button type="button" class="fold fold--down" aria-label="Expand Section Curve Settings"></button></h3></section>
      </div>
      <div class="scroll">
        <button type="button" aria-label="Scroll up"><svg viewBox="0 0 12 12"><path d="M1 8l5-5 5 5" fill="none" stroke="#444" stroke-width="2"/></svg></button>
        <div class="scroll-track"><div class="scroll-thumb"></div></div>
        <button type="button" aria-label="Scroll down"><svg viewBox="0 0 12 12"><path d="M1 4l5 5 5-5" fill="none" stroke="#444" stroke-width="2"/></svg></button>
      </div>
    </div>
    <button type="button" class="shrink" aria-label="Show fewer options"></button>
    <footer class="dialog-foot"><button type="button" class="ok">OK</button><button type="button" class="cancel">Cancel</button></footer>
  </form>

  <!-- Graphics window -->
  <section class="graphics">
    <div class="doc-tabs">
      <button class="doc-tab">X08 1 PIPE WITH FLANGE.prt
        <svg viewBox="0 0 12 12"><path d="M7 1H2v10h7V7M6 1l4 3-4 3" fill="none" stroke="#fff" stroke-width="1.500"/></svg>
        <svg viewBox="0 0 12 12"><path d="M2 2l8 8M10 2l-8 8" stroke="#b8c4cc" stroke-width="2"/></svg>
      </button>
    </div>
    <div class="view">
      <svg class="scene" viewBox="452 259 1434 733" preserveAspectRatio="xMidYMid slice" role="img" aria-label="Sectioned pipe with flange">
        <defs>
          <linearGradient id="bore" gradientUnits="userSpaceOnUse" x1="635" y1="650" x2="850" y2="1100"><stop offset="0" stop-color="#333"/><stop offset=".2" stop-color="#4c4c4c"/><stop offset=".45" stop-color="#686868"/><stop offset=".66" stop-color="#a3a3a3"/><stop offset=".82" stop-color="#959595"/><stop offset="1" stop-color="#787878"/></linearGradient>
          <linearGradient id="boreR" gradientUnits="userSpaceOnUse" x1="1300" y1="340" x2="1250" y2="1020"><stop offset="0" stop-color="#2e2e2e"/><stop offset=".35" stop-color="#4c4c4c"/><stop offset=".7" stop-color="#727272"/><stop offset="1" stop-color="#808080"/></linearGradient>
          <linearGradient id="fade" gradientUnits="userSpaceOnUse" x1="700" y1="0" x2="1150" y2="0"><stop offset="0" stop-color="#fff" stop-opacity="0"/><stop offset="1" stop-color="#fff"/></linearGradient>
          <mask id="fadeMask" maskUnits="userSpaceOnUse" x="300" y="200" width="2000" height="1200"><path d="M300 200h2000v1200H300z" fill="url(#fade)"/></mask>
          <linearGradient id="ring" x1="0" y1="0" x2=".3" y2="1"><stop offset="0" stop-color="#3a3a3a"/><stop offset=".35" stop-color="#6a6a6a"/><stop offset=".8" stop-color="#8c8c8c"/><stop offset="1" stop-color="#777"/></linearGradient>
          <linearGradient id="hole" x1="0" y1="0" x2=".6" y2="1"><stop offset="0" stop-color="#444"/><stop offset=".6" stop-color="#8e8e8e"/><stop offset="1" stop-color="#777"/></linearGradient>
          <linearGradient id="drill" x1="0" y1="0" x2="1" y2="0"><stop offset="0" stop-color="#606060"/><stop offset=".3" stop-color="#333"/><stop offset="1" stop-color="#4c4c4c"/></linearGradient>
          <linearGradient id="side" x1="0" y1="0" x2="0" y2="1"><stop offset="0" stop-color="#3c3c3c"/><stop offset=".55" stop-color="#484848"/><stop offset=".8" stop-color="#909090"/><stop offset="1" stop-color="#6c6c6c"/></linearGradient>
          <radialGradient id="orange" cx=".35" cy=".35" r=".7"><stop offset="0" stop-color="#ffb347"/><stop offset="1" stop-color="#c85a00"/></radialGradient>
          <linearGradient id="gold" x1="0" y1="0" x2="0" y2="1"><stop offset="0" stop-color="#ffe45a"/><stop offset="1" stop-color="#c89e10"/></linearGradient>
        </defs>

        <g transform="translate(740 380) scale(.33333 .34435)">
          <!-- Flange -->
          <path d="M106 370Q106 310 165 298C190 262 230 254 262 260Q295 264 320 276L700 470L600 640L200 340z" fill="#7d7d7d" stroke="#333" stroke-width="3"/>
          <path d="M106 370Q115 310 165 305Q190 310 215 338L586 520V1530L240 1335Q106 1270 106 1150z" fill="#404040"/>
          <path d="M215 338L586 520M106 370V1150Q106 1270 240 1335L586 1530M215 310L310 270M262 260L680 466" fill="none" stroke="#2b2b2b" stroke-width="3"/>
          <ellipse cx="222" cy="438" rx="34" ry="58" transform="rotate(-20 222 438)" fill="url(#hole)"/>
          <ellipse cx="220" cy="1199" rx="36" ry="53" transform="rotate(-24 220 1199)" fill="url(#hole)" stroke="#2b2b2b" stroke-width="2"/>
          <path d="M275 440Q300 500 365 507Q410 500 425 455M275 1020Q215 1040 222 1110Q250 1260 400 1258" fill="none" stroke="#6b6b6b" stroke-width="2" stroke-dasharray="6 9"/>
          <path d="M586 635L500 606Q410 585 350 608C270 650 242 750 242 850C245 1060 380 1320 586 1412L634 1392V610z" fill="#404040" stroke="#2a2a2a" stroke-width="3"/>
          <path d="M350 610C270 650 242 750 242 850C245 1060 380 1320 586 1412L634 1392C440 1290 290 1070 290 850C288 760 300 680 350 610z" fill="url(#ring)" stroke="#2a2a2a" stroke-width="2"/>

          <!-- Outer skin behind the cut -->
          <path d="M1254 232Q1360 208 1470 206Q1640 210 1825 225Q1900 200 1990 211Q2080 230 2177 281L2090 300L1640 270L1270 310z" fill="#787878" stroke="#555" stroke-width="2"/>
          <path d="M1862 230Q1960 220 2055 264" fill="none" stroke="#333" stroke-width="3"/>

          <!-- Connector pad -->
          <path d="M714 290Q716 270 735 262L1080 68Q1110 55 1150 72L1252 130L1220 320L832 480L740 580L700 560L640 470L700 440L714 480z" fill="#838383" stroke="#333" stroke-width="3"/>
          <path d="M714 285L832 352V480Q820 540 750 575L700 560V500Q714 490 714 470z" fill="url(#side)" stroke="#333" stroke-width="2"/>
          <path d="M700 505L790 545" stroke="#222" stroke-width="3"/>
          <ellipse cx="965" cy="268" rx="82" ry="45" fill="#8d8d8d" stroke="#333" stroke-width="3"/>
          <path d="M918 318L908 290Q920 254 980 250Q1030 250 1045 270V480H925z" fill="url(#drill)"/>
          <ellipse cx="1162" cy="173" rx="33" ry="20" fill="#8d8d8d" stroke="#222" stroke-width="3"/>
          <path d="M1143 175Q1160 155 1197 165V300H1145z" fill="url(#drill)"/>
          <path d="M1145 272H1192V300H1150z" fill="#bdbdbd"/>

          <!-- Bore -->
          <path d="M540 673C430 680 375 760 375 860C378 1040 480 1210 635 1293L975 1098L1090 1048L1200 1010L1300 989L1390 987L1885 1018C1790 970 1727 850 1727 702C1727 560 1800 410 1930 349L1670 329H1540L1420 348L1180 412L1040 480H925V543L635 707z" fill="url(#bore)"/>
          <path d="M718 655C730 850 850 1040 975 1098L1090 1048L1200 1010L1300 989L1390 987L1885 1018C1790 970 1727 850 1727 702C1727 560 1800 410 1930 349L1670 329H1540L1420 348L1180 412L1040 480H925V543z" fill="url(#boreR)" mask="url(#fadeMask)"/>
          <path d="M540 673C430 680 375 760 375 860C378 1040 480 1210 635 1293" fill="none" stroke="#2b2b2b" stroke-width="2"/>
          <path d="M718 655C730 850 850 1040 975 1098M1300 450C1240 520 1240 600 1240 650C1245 800 1300 920 1380 970M1885 1018C1790 970 1727 850 1727 702C1727 560 1800 410 1930 349" fill="none" stroke="#2a2a2a" stroke-width="3"/>

          <!-- Cut faces -->
          <g fill="#98c275" stroke="#0a14b4" stroke-width="6" stroke-linejoin="round">
            <path d="M586 520L670 478Q695 470 700 505V555Q705 585 740 575L790 545Q830 520 832 470V362L918 318L926 330V543L635 707V610L586 635z"/>
            <path d="M1040 480V270Q1045 240 1065 230L1145 192V300L1168 307L1192 275L1195 160L1252 130L1254 280Q1262 305 1285 302L1370 278Q1450 261 1490 256Q1560 245 1630 245L2050 271L2080 247L2092 252L2105 274L2177 281L2145 363L1930 349L1670 330H1540Q1480 334 1420 348L1180 412z"/>
            <path d="M586 1530V1412L634 1390V1293L975 1098Q1030 1068 1090 1048L1200 1010L1300 989L1390 987L1885 1018L1857 1102L1778 1097L1750 1118L1727 1094L1380 1070Q1300 1068 1230 1079Q1120 1105 1000 1165L735 1312Q700 1340 700 1375V1420Q695 1475 660 1495z"/>
          </g>

          <!-- Section plane -->
          <path d="M498 1777V470L1980 -351M2266 -351V944L779 1777" fill="none" stroke="#4b8abf" stroke-width="4"/>
        </g>

        <!-- Origin handles -->
        <g transform="translate(1150 400) scale(.33333)" fill="none" stroke-linecap="round">
          <path d="M152 690V900M305 590Q310 680 255 740M308 765Q300 830 260 860" stroke="#aaa" stroke-width="12"/>
          <path d="M150 673L350 563M150 673L350 785" stroke="#f2f2f2" stroke-width="13"/>
          <path d="M305 588Q370 625 370 675Q365 730 308 762M255 740Q215 815 155 850Q205 875 260 866" stroke="#efefef" stroke-width="8"/>
          <g fill="url(#gold)"><path d="M340 542L412 526L360 576zM342 795L372 773L410 824zM130 912H174L152 972z"/><ellipse cx="152" cy="910" rx="21" ry="13"/><circle cx="368" cy="674" r="12"/><circle cx="259" cy="736" r="12"/><circle cx="260" cy="860" r="12"/></g>
          <circle cx="150" cy="673" r="20" fill="url(#orange)"/>
        </g>
        <g class="axis">
          <text x="1285" y="576" fill="#2c7a38">Y</text>
          <text x="1285" y="685" fill="#2b4fd0">Z</text>
          <text x="1194" y="740" fill="#b5382a">X</text>
        </g>

        <!-- View triad -->
        <g transform="translate(0 615) scale(.33333)">
          <path d="M1462 857L1515 885V945L1462 972L1410 945V885z" fill="#c6c9c9" stroke="#999" stroke-width="3"/>
          <path d="M1410 885L1515 945M1410 945L1520 880M1462 857V972" stroke="#9a9a9a" stroke-width="3"/>
          <path d="M1410 945V870" stroke="#12309c" stroke-width="9"/><path d="M1400 880L1411 845L1421 880z" fill="#12309c"/>
          <path d="M1410 945L1480 985" stroke="#b02020" stroke-width="9"/><path d="M1472 990L1482 972L1500 996z" fill="#b02020"/>
          <circle cx="1408" cy="946" r="10" fill="#ddd"/>
        </g>
        <g class="axis axis--small"><text x="466" y="897" fill="#2b4fd0">Z</text><text x="498" y="952" fill="#b5382a">X</text></g>

        <g class="mark"><text x="577" y="533" class="mark-han">莫西网</text><text x="816" y="533">www.</text><text x="980" y="533">3dmox.</text><text x="1220" y="533">com</text></g>
      </svg>

      <div class="xyz">
        <i class="grip"></i>
        <label for="px">X</label><input type="text" id="px" value=" 0.0000000">
        <label for="py">Y</label><input type="text" id="py" value="84.611394">
        <label for="pz">Z</label><input type="text" id="pz" value="-12.34814">
      </div>
    </div>
  </section>

  <aside class="rail">
    <button aria-label="Surface"><svg><use href="#i-sheet"/></svg></button>
    <button class="rail-caret" aria-label="Surface list"><svg class="mini"><use href="#i-down"/></svg></button>
    <button aria-label="Offset face"><svg><use href="#i-patch"/></svg></button>
    <button aria-label="Replace face"><svg><use href="#i-boss"/></svg></button>
    <button aria-label="Thicken"><svg><use href="#i-band"/></svg></button>
    <button aria-label="Sketch"><svg><use href="#i-sketch"/></svg></button>
    <hr>
    <button class="rail-end" aria-label="Expand"><svg viewBox="0 0 8 10"><path d="M7 1v8L1 5z"/></svg></button>
  </aside>
</main>

<footer class="status">
  <p>Drag a handle or select a handle for direct entry; use Alt key to turn off snapping</p>
  <p>Translate origin</p>
  <button aria-label="Notifications"><svg><use href="#i-flags"/></svg></button>
  <button aria-label="Full screen"><svg><use href="#i-full"/></svg></button>
</footer>
</body>
</html>
```
FILE: styles.css
```css
* { box-sizing: border-box; }

body {
  margin: 0;
  height: 100vh;
  display: flex;
  flex-direction: column;
  overflow: hidden;
  background: #fff;
  color: #222;
  font: 16px/23px "Noto Sans", "Open Sans", sans-serif;
}

h1, h2, h3, p { margin: 0; font-weight: 400; }

button {
  padding: 0;
  border: 0;
  background: none;
  color: inherit;
  font: inherit;
}

input, select {
  min-width: 0;
  border: 1px solid #999;
  border-radius: 0;
  background: #fff;
  color: inherit;
  font: inherit;
  outline: 0;
}

svg { display: block; flex: none; width: 16px; height: 16px; }
.sprite { position: absolute; width: 0; height: 0; }
.mini { width: 8px; height: 8px; fill: #111; }

/* Drop-down boxes */
.select {
  position: relative;
  display: flex;
  align-items: center;
  border: 1px solid #999;
  background: #fff;
}
.select select {
  flex: 1;
  height: 100%;
  padding: 0 5px;
  border: 0;
  background: none;
  appearance: none;
}
.select::after {
  content: "";
  position: absolute;
  right: 7px;
  border: 6px solid transparent;
  border-top: 7px solid #111;
  border-bottom: 0;
  pointer-events: none;
}
.select--dim::after { border-top-color: #aaa; }

.caret { display: flex; align-items: center; justify-content: center; width: 16px; }
.caret svg { width: 8px; height: 8px; fill: #111; }
.caret--dim svg { fill: #aaa; }
.caret--bar svg { border-top: 1px solid #111; }

.on { background: #c9e5ea; outline: 1px solid #a5cdd6; outline-offset: -1px; }

/* Title bar */
.titlebar {
  position: relative;
  flex: none;
  display: flex;
  align-items: center;
  justify-content: space-between;
  height: 34px;
}
.quick { display: flex; align-items: center; height: 34px; }
.logo {
  width: 48px;
  padding-left: 4px;
  color: #8295a3;
  font: bold 27px/34px "Open Sans", sans-serif;
}
.sep { flex: none; width: 1px; height: 26px; margin: 0 2px; background: #ddd; }
.tb { display: flex; align-items: center; justify-content: center; width: 24px; height: 24px; }
.tb-text { display: flex; align-items: center; gap: 5px; margin-left: 4px; }
.tb-text--next { margin-left: 8px; }
.progress {
  position: absolute;
  top: 0;
  left: 779px;
  width: 361px;
  height: 2px;
  background: #e2e2e2;
}
.progress span { display: block; width: 72px; height: 2px; background: #1272c4; }
.titlebar h1 { margin-right: auto; margin-left: 497px; font-size: 17px; }
.window-controls { display: flex; align-items: center; gap: 21px; padding: 4px 8px 0 0; }
.brand { margin-right: 8px; color: #158a85; font-size: 17px; font-weight: 700; }
.window-controls svg { width: 14px; height: 14px; }

/* Ribbon tabs */
.tabs { flex: none; display: flex; align-items: stretch; height: 38px; background: #dbdbdb; }
.tab { padding: 0 12px; font-size: 20px; }
.tab--file { width: 72px; margin-right: 3px; background: #56a0b9; color: #fff; font-size: 19px; }
.tab--on { border-top: 1px solid #999; background: #fff; color: #1b6a8a; }
.find {
  display: flex;
  align-items: center;
  width: 179px;
  height: 28px;
  margin: 5px 0 0 auto;
  padding-right: 5px;
  border: 1px solid #999;
  background: #fff;
}
.find input { flex: 1; width: 100%; padding: 0 4px; border: 0; }
.find input::placeholder { color: #aaa; }
.tab-tools { display: flex; align-items: center; gap: 11px; padding: 0 5px 0 10px; }
.help-mark { fill: #fff; font: bold 13px "Noto Sans", sans-serif; }

/* Ribbon */
.ribbon {
  flex: none;
  display: flex;
  height: 117px;
  border-bottom: 1px solid #ccc;
}
.group { display: flex; flex-direction: column; border-right: 1px solid #d6d6d6; margin: 2px 0 1px; }
.group-body { flex: 1; display: flex; align-items: flex-start; min-height: 0; }
.group-foot {
  flex: none;
  display: flex;
  align-items: center;
  justify-content: space-between;
  height: 23px;
  padding: 0 10px 0 5px;
  color: #1b6a8a;
}
.group-foot--mid span { flex: 1; padding-right: 12px; text-align: center; }
.group--window { width: 87px; }
.group--zoom { width: 108px; }
.group--zoom .group-foot { padding-left: 10px; }
.group--vis { width: 488px; }
.group--viz { width: 458px; }
.group--true { width: 80px; }

.big { width: 100%; padding: 3px 0 6px; text-align: center; }
.big > svg { width: 32px; height: 32px; margin: 0 auto 3px; }
.big > svg.mini { width: 8px; height: 8px; margin: 5px auto 0; }
.big > svg.short { height: 24px; margin: 4px auto 7px; }
.big--show { width: 78px; margin-left: 8px; }
.big--edit { width: 62px; }
.big--clip { width: 64px; margin-left: 3px; }
.big--see { width: 74px; }
.big--more { width: 40px; margin-left: 14px; }
.more-box {
  display: flex;
  align-items: center;
  justify-content: center;
  height: 34px;
  margin-bottom: 1px;
  border: 1px solid #ddd;
}
.big--pref { width: 92px; margin-left: 10px; }
.big--obj { width: 88px; margin-left: 4px; }
.big--exp { width: 52px; margin-left: 4px; }

.row-btn { display: flex; align-items: center; gap: 4px; height: 28px; white-space: nowrap; }
.row-btn:disabled { color: #bbb; }
.zoom-body { flex-direction: column; gap: 14px; padding: 8px 0 0 11px; }
.zoom-icon { width: 24px; height: 20px; }
.scale { width: 84px; height: 28px; padding: 0 5px; }
.stack { width: 133px; margin-left: 4px; padding-top: 4px; }
.layer { width: 73px; height: 27px; margin-bottom: 5px; }
.stack--tight { width: auto; margin-left: 7px; padding-top: 0; }
.stack--tight .row-btn { height: 29px; padding: 0 4px 0 3px; }
.ribbon-more { margin-left: auto; align-items: flex-end; padding-bottom: 8px; }

/* Selection bar */
.selbar {
  flex: none;
  display: flex;
  align-items: center;
  height: 38px;
}
.menu-btn {
  display: flex;
  align-items: center;
  gap: 5px;
  width: 94px;
  height: 32px;
  padding-left: 10px;
  border-right: 1px solid #ddd;
}
.type-filter { width: 193px; height: 27px; margin-left: 11px; }
.scope { width: 202px; height: 27px; margin-left: 8px; }
.strip {
  display: flex;
  align-items: center;
  height: 32px;
  padding: 0 7px;
  border-right: 1px solid #ddd;
}
.strip--snap { padding: 0 7px 0 3px; }
.strip--snap .caret { width: 14px; }
.strip--last .caret { width: 12px; }
.tool {
  display: flex;
  align-items: center;
  justify-content: center;
  width: 23px;
  height: 23px;
  margin: 0 1px;
}
.tool svg { width: 17px; height: 17px; }
.bar-more { margin: 14px 0 0 auto; }

/* Work area */
.work { flex: 1; display: flex; min-height: 0; border-top: 1px solid #999; }

/* Dialog */
.dialog {
  flex: none;
  display: flex;
  flex-direction: column;
  width: 452px;
  background: #f0f0f0;
  font-size: 17px;
}
.dialog-head {
  flex: none;
  display: flex;
  align-items: center;
  gap: 11px;
  height: 32px;
  padding: 0 11px;
  background: #56a0b9;
  color: #fff;
}
.dialog-head h2 { flex: 1; font-size: 21px; line-height: 32px; }
.dialog-main { flex: 1; display: flex; min-height: 0; padding: 3px 7px 0 6px; }
.cards { flex: 1; min-height: 0; overflow: hidden; }
.card {
  padding: 0 9px 8px;
  border-bottom: 2px solid #cbcbcb;
  background: #fff;
}
.card--top { padding-top: 10px; }
.card--shut { padding-top: 2px; padding-bottom: 0; }
.card h3 {
  display: flex;
  align-items: center;
  justify-content: space-between;
  height: 40px;
  margin: 0 -1px;
  padding-bottom: 2px;
  color: #1b6a7d;
  font-size: 20px;
  line-height: 30px;
}
.card--shut h3 { height: 31px; padding: 0; }
.fold {
  width: 18px;
  height: 14px;
  background: #155e75;
  clip-path: polygon(50% 0, 100% 100%, 76% 100%, 50% 44%, 24% 100%, 0 100%);
}
.fold--down { clip-path: polygon(50% 100%, 100% 0, 76% 0, 50% 56%, 24% 0, 0 0); }

.kind { height: 33px; padding-left: 4px; }
.field { display: flex; align-items: center; padding-left: 1px; }
.field > :first-child { flex: 1; }
.field input { width: 190px; height: 31px; padding: 0 8px; }
.field input.mono, .slide .mono {
  width: 106px;
  height: 31px;
  padding: 0 4px;
  color: #555;
  font: 19px "Liberation Mono", monospace;
  text-align: right;
}
.field input::selection { background: #0a73d1; color: #fff; }
.field--31 { height: 31px; }
.field--33 { height: 33px; margin-bottom: 8px; }
.orient { width: 174px; height: 33px; }
.field--plane { height: 32px; margin-bottom: 6px; }
.planes { display: flex; gap: 4px; padding-right: 3px; }
.planes svg { width: 32px; height: 32px; }
.planes .on { background: #86bfd0; outline: 0; }
.ax { font: bold 14px "Liberation Sans", sans-serif; }
.num { font: bold 10px "Liberation Sans", sans-serif; }
.tiny { font: bold 8px "Liberation Sans", sans-serif; }
.sq { border: 1px solid #aaa; background: #fff; display: grid; place-items: center; }
.sq--s { width: 24px; height: 24px; }
.sq--s svg { width: 22px; height: 22px; }
.sq--m { width: 24px; height: 29px; }
.sq--m svg { width: 22px; height: 22px; }
.sq--l { width: 32px; height: 32px; }
.sq--l svg { width: 30px; height: 30px; }
.field--spec { height: 32px; gap: 2px; margin-bottom: 2px; }
.pair { display: flex; height: 32px; border: 1px solid #aaa; }
.pair svg { width: 30px; height: 30px; }
.pair-caret { width: 26px; border-left: 1px solid #aaa; display: grid; place-items: center; }
.pair .mini { width: 8px; height: 8px; }
.field--rev { height: 29px; margin-bottom: 2px; }
.field--alt { height: 32px; }

.slide { display: flex; align-items: center; justify-content: space-between; height: 31px; padding-left: 10px; }
.slide input[type="range"] {
  width: 268px;
  height: 31px;
  margin: 0;
  border: 0;
  appearance: none;
  background: linear-gradient(#aaa, #aaa) center / 100% 4px no-repeat;
}
.slide input::-webkit-slider-thumb {
  appearance: none;
  width: 15px;
  height: 29px;
  border: 1px solid #467;
  background: #56a0b9;
}
.limits { display: flex; justify-content: space-between; width: 288px; height: 32px; padding-left: 6px; line-height: 33px; }
.transform { display: flex; align-items: center; gap: 2px; height: 32px; margin-top: 2px; }
.spec { flex: 1; display: flex; align-items: center; gap: 4px; height: 32px; background: #ffe17b; }
.csys { background: #ffe17b; }
.csys svg { width: 32px; height: 32px; }

.scroll { flex: none; display: flex; flex-direction: column; width: 25px; padding-left: 2px; }
.scroll button { display: grid; place-items: center; height: 27px; }
.scroll svg { width: 12px; height: 12px; }
.scroll-track { flex: 1; }
.scroll-thumb { height: 88%; background: #cdcdcd; }

.shrink { flex: none; height: 14px; margin: 0 7px 0 8px; border-bottom: 1px solid #c4c4c4; display: grid; place-items: center; }
.shrink::before { content: ""; border: 6px solid transparent; border-bottom: 6px solid #111; border-top: 0; }
.dialog-foot { flex: none; display: flex; justify-content: flex-end; gap: 5px; padding: 8px 16px 9px 0; }
.dialog-foot button { width: 81px; height: 33px; border: 1px solid #aaa; background: #e1e1e1; }
.dialog-foot .ok { border-color: #72b2c7; background: #72b2c7; color: #fff; }

/* Graphics window */
.graphics { flex: 1; display: flex; flex-direction: column; min-width: 0; }
.doc-tabs { flex: none; height: 31px; border-bottom: 2px solid #5b9bb0; }
.doc-tab { display: flex; align-items: center; gap: 6px; height: 29px; padding: 0 6px 0 0; background: #56a0b9; color: #fff; font-size: 17px; }
.doc-tab svg { width: 11px; height: 11px; }
.view {
  position: relative;
  flex: 1;
  min-height: 0;
  background: linear-gradient(#b4b4b4, #cdcdcd 40%, #e6e6e6 78%, #e6e6e6);
}
.scene { width: 100%; height: 100%; }
.axis { font: 16px "Noto Sans", sans-serif; }
.axis--small { font-size: 13px; }
.mark {
  fill: #ececec;
  fill-opacity: .88;
  font: 68px "Liberation Serif", serif;
  filter: drop-shadow(1px 2px 0 #444);
}
.mark-han { font: 300 82px "Noto Sans CJK SC", sans-serif; }

.xyz {
  position: absolute;
  top: 180px;
  right: 83px;
  display: grid;
  grid-template-columns: 9px 16px 90px;
  grid-template-rows: repeat(3, 31px);
  column-gap: 3px;
  align-items: center;
  width: 127px;
  padding: 3px 2px;
  border: 1px solid #999;
  background: #f2f2f2;
  text-align: right;
}
.grip {
  grid-row: 1 / 4;
  align-self: stretch;
  background: radial-gradient(circle at 2px 2px, #aaa 1px, transparent 1px) 0 0 / 4px 4px;
}
.xyz input { width: 90px; height: 31px; padding: 0 3px; font-size: 17px; }

/* Right-hand rail */
.rail { flex: none; display: flex; flex-direction: column; align-items: center; width: 30px; padding: 5px 0 0 4px; }
.rail button { height: 32px; }
.rail svg { width: 22px; height: 22px; }
.rail .rail-caret { height: 14px; }
.rail .mini { width: 8px; height: 8px; }
.rail hr { width: 100%; margin: 4px 0 0; border: 0; border-top: 1px solid #ccc; }
.rail .rail-end { height: 20px; margin-top: auto; }
.rail .rail-end svg { width: 8px; height: 10px; }

/* Status line */
.status {
  flex: none;
  display: flex;
  align-items: center;
  gap: 4px;
  height: 22px;
  padding: 3px 50px 0 3px;
  border-top: 1px solid #999;
}
.status p { flex: 1; color: #111; font-weight: 700; line-height: 18px; white-space: nowrap; }
.status p:first-child { flex: none; width: 899px; }
```
FILE: app.js
```js
// Start with the section name ready to be overtyped.
const sectionName = document.getElementById("sname");
sectionName.focus();
sectionName.select();
```
